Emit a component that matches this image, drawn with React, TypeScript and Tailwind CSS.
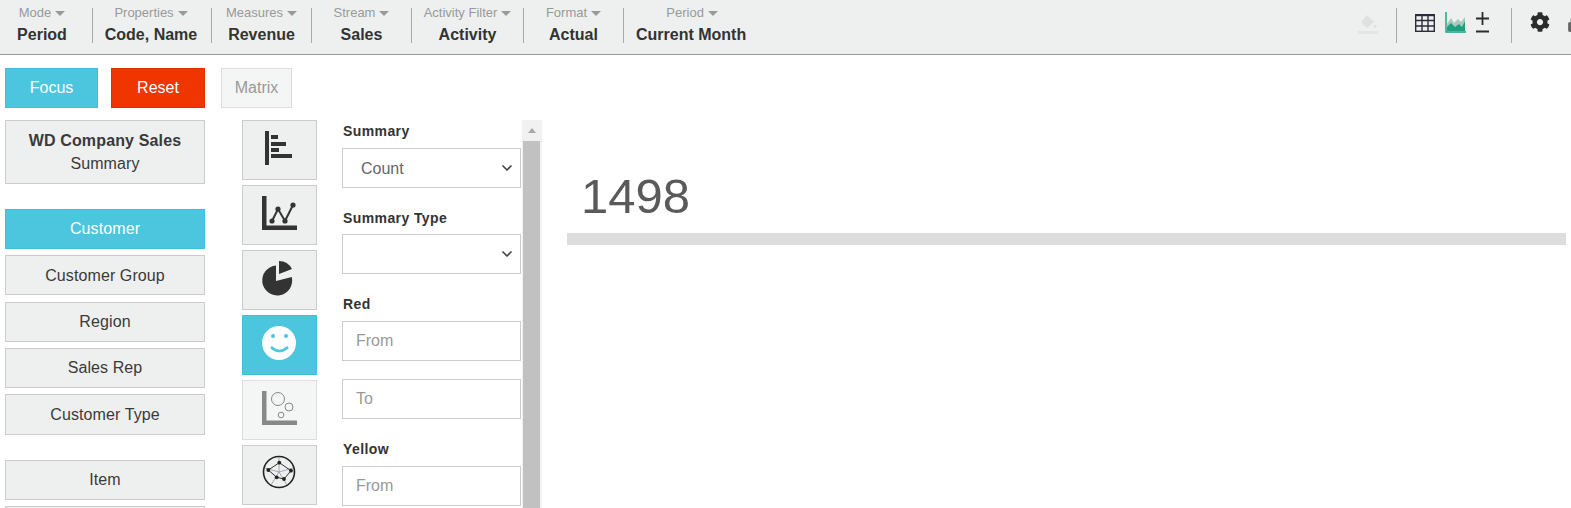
import React from 'react';
import { FaCog, FaLock } from 'react-icons/fa';
import { ChevronDown } from 'lucide-react';

const filters = [
  { label: 'Mode', value: 'Period', cell: 'w-[93px] pr-2' },
  { label: 'Properties', value: 'Code, Name', cell: 'w-[119px] pr-[2px]' },
  { label: 'Measures', value: 'Revenue', cell: 'w-[100px]' },
  { label: 'Stream', value: 'Sales', cell: 'w-[100px]' },
  { label: 'Activity Filter', value: 'Activity', cell: 'w-[112px]' },
  { label: 'Format', value: 'Actual', cell: 'w-[100px]' },
];

const Caret = () => <span className="ml-1 inline-block align-middle w-0 h-0 border-x-[5px] border-x-transparent border-t-[5px] border-t-[#999]" />;

const Divider = () => <div className="w-px h-[35px] bg-[#aaa] shrink-0" />;

const FilterCell: React.FC<{ label: string; value: string; cell: string }> = ({ label, value, cell }) => (
  <div className={`${cell} h-[35px] shrink-0 flex flex-col items-center border-r border-[#aaa]`}>
    <div className="text-[13px] leading-[15px] -mt-[3px] text-[#999] whitespace-nowrap">
      {label}
      <Caret />
    </div>
    <div className="mt-[5px] text-[16px] leading-[20px] font-bold text-[#333] whitespace-nowrap">{value}</div>
  </div>
);

const SideButton: React.FC<{ children?: React.ReactNode; h?: string; active?: boolean; className?: string }> = ({ children, h = 'h-[40px]', active, className = '' }) => (
  <div
    className={`${h} ${className} shrink-0 box-border border flex flex-col items-center justify-center text-[16px] tracking-[0.1px] ${
      active ? 'bg-[#4cc5df] border-[#3fbfdb] text-white' : 'bg-[#eef0ef] border-[#ccc] text-[#3a3a3a]'
    }`}
  >
    {children}
  </div>
);

const IconButton: React.FC<{ children: React.ReactNode; active?: boolean; faded?: boolean }> = ({ children, active, faded }) => (
  <div
    className={`w-[75px] h-[60px] box-border border shrink-0 ${
      active ? 'bg-[#4cc5df] border-[#3fbfdb]' : faded ? 'bg-[#f4f6f5] border-[#ddd]' : 'bg-[#eef0ef] border-[#ccc]'
    }`}
  >
    <svg viewBox="0 0 73 58" className="block w-[73px] h-[58px]">
      {children}
    </svg>
  </div>
);

const FieldLabel: React.FC<{ children: React.ReactNode; className?: string }> = ({ children, className = '' }) => (
  <div className={`pl-[1px] text-[14px] leading-[18px] font-bold text-[#333] tracking-[0.4px] ${className}`}>{children}</div>
);

const SelectBox: React.FC<{ value?: string; className?: string }> = ({ value, className = '' }) => (
  <div className={`h-[40px] box-border border border-[#ccc] flex items-center justify-between pl-[18px] pr-[5px] text-[16px] text-[#666] ${className}`}>
    <span className="pt-[1px]">{value}</span>
    <ChevronDown className="w-[16px] h-[16px] text-[#444]" strokeWidth={2.5} />
  </div>
);

const TextBox: React.FC<{ placeholder: string; className?: string }> = ({ placeholder, className = '' }) => (
  <input
    readOnly
    placeholder={placeholder}
    className={`block w-full h-[40px] box-border border border-[#ccc] px-[13px] text-[16px] outline-none placeholder:text-[#999] ${className}`}
  />
);

export default function App() {
  return (
    <div className="h-[508px] overflow-hidden bg-white font-['Liberation_Sans',Arial,sans-serif]">
      {/* Top filter bar */}
      <div className="h-[55px] box-border bg-[#eef0ef] border-b border-[#999] flex items-start pt-[8px] overflow-hidden">
        {filters.map((f) => (
          <FilterCell key={f.label} {...f} />
        ))}
        <div className="ml-[12px] flex flex-col items-center shrink-0">
          <div className="ml-[2px] text-[13px] leading-[15px] -mt-[3px] text-[#999] whitespace-nowrap">
            Period
            <Caret />
          </div>
          <div className="mt-[5px] text-[16px] leading-[20px] font-bold text-[#333] whitespace-nowrap">Current Month</div>
        </div>

        <div className="ml-auto -mr-[14px] flex items-start shrink-0">
          <svg viewBox="0 0 20 20" className="w-[20px] h-[20px] mt-[6px]">
            <path d="M9 1 L16 8 L9 14 L3 8 Z" fill="#dfe1e0" />
            <circle cx="17" cy="12" r="1.6" fill="#dfe1e0" />
            <rect x="0" y="17" width="20" height="3" fill="#e4e6e5" />
          </svg>
          <div className="ml-[18px]"><Divider /></div>
          <svg viewBox="0 0 20 18" className="ml-[18px] mt-[6px] w-[20px] h-[18px]" fill="none" stroke="#2f2b3d" strokeWidth="1.4">
            <rect x="0.7" y="0.7" width="18.6" height="16.6" />
            <path d="M0.7 1.2 H19.3" strokeWidth="2" />
            <path d="M7 1V17M13 1V17M1 6.5H19M1 12H19" />
          </svg>
          <svg viewBox="0 0 21 21" className="ml-[10px] mt-[4px] w-[21px] h-[21px]">
            <path d="M2 19 V12 L6 6 L9 11 L13 7 L16 10 L20 5 V19 Z" fill="#a9c9bd" />
            <path d="M2 19 V15 L6 11 L10 15 L14 12 L17 15 L20 9 V19 Z" fill="#1f9e80" />
            <path d="M1 0 V20 H21" fill="none" stroke="#1f9e80" strokeWidth="1.4" />
          </svg>
          <svg viewBox="0 0 13 21" className="ml-[10px] mt-[4px] w-[13px] h-[21px]" stroke="#2b2b2b" strokeWidth="1.8">
            <path d="M6.5 0 V13 M0 6.5 H13 M0 19.5 H13" />
          </svg>
          <div className="ml-[22px]"><Divider /></div>
          <FaCog className="ml-[18px] mt-[4px] text-[#2b2b2b]" size={20} />
          <FaLock className="ml-[17px] mt-[6px] text-[#666]" size={18} />
        </div>
      </div>

      {/* Action buttons */}
      <div className="flex items-start pl-[5px] pt-[13px]">
        <div className="w-[93px] h-[40px] box-border border border-[#3fbfdb] bg-[#4cc5df] text-white text-[16px] flex items-center justify-center">Focus</div>
        <div className="ml-[13px] w-[94px] h-[40px] box-border border border-[#e03000] bg-[#f03500] text-white text-[16px] flex items-center justify-center">Reset</div>
        <div className="ml-[16px] w-[71px] h-[40px] box-border border border-[#ddd] bg-[#f4f6f5] text-[#999] text-[16px] flex items-center justify-center">Matrix</div>
      </div>

      <div className="flex items-start pl-[5px] mt-[12px]">
        {/* Dimension list */}
        <div className="w-[200px] shrink-0 flex flex-col">
          <SideButton h="h-[64px]">
            <div className="font-bold leading-[22px] tracking-[0.15px]">WD Company Sales</div>
            <div className="leading-[23px]">Summary</div>
          </SideButton>
          <SideButton active className="mt-[25px]">Customer</SideButton>
          <SideButton className="mt-[6px] pt-[1px]">Customer Group</SideButton>
          <SideButton className="mt-[7px]">Region</SideButton>
          <SideButton className="mt-[6px]">Sales Rep</SideButton>
          <SideButton h="h-[41px]" className="mt-[6px]">Customer Type</SideButton>
          <SideButton className="mt-[25px]">Item</SideButton>
          <SideButton className="mt-[6px]" />
        </div>

        {/* Chart type icons */}
        <div className="ml-[37px] flex flex-col gap-[5px] shrink-0">
          <IconButton>
            <g fill="#333">
              <rect x="22" y="10" width="4" height="34" />
              <rect x="28" y="14" width="7" height="4" />
              <rect x="28" y="21" width="15" height="4" />
              <rect x="28" y="27" width="8" height="4" />
              <rect x="28" y="33" width="21" height="4" />
            </g>
          </IconButton>
          <IconButton>
            <path d="M19 10 H23.5 V39.5 H54 V44 H19 Z" fill="#333" />
            <path d="M29 35 L35 23 L42 35 L50 19" fill="none" stroke="#333" strokeWidth="2" />
            <g fill="#333">
              <circle cx="29" cy="35" r="2.6" />
              <circle cx="35" cy="23" r="2.6" />
              <circle cx="42" cy="35" r="2.6" />
              <circle cx="50" cy="19" r="2.6" />
            </g>
          </IconButton>
          <IconButton>
            <path d="M33 30 L33 14.5 A15 15 0 1 0 48.8 26 Z" fill="#333" />
            <path d="M36 23 L36 10 A15 15 0 0 1 49 18 Z" fill="#333" />
          </IconButton>
          <IconButton active>
            <circle cx="36" cy="27" r="17" fill="#fff" />
            <circle cx="30" cy="20" r="2" fill="#4cc5df" />
            <circle cx="43" cy="20" r="2" fill="#4cc5df" />
            <path d="M28 31 Q36.5 39 45 31" fill="none" stroke="#4cc5df" strokeWidth="2.6" />
          </IconButton>
          <IconButton faded>
            <path d="M19 10 H23.5 V39.5 H54 V44 H19 Z" fill="#888" />
            <g fill="none" stroke="#888" strokeWidth="1">
              <circle cx="35" cy="18" r="6.5" />
              <circle cx="46" cy="26" r="4" />
              <circle cx="38" cy="34" r="2.8" />
            </g>
          </IconButton>
          <IconButton>
            <circle cx="36" cy="26" r="15.5" fill="none" stroke="#222" strokeWidth="1.6" />
            <path d="M36 26 L36 11 M36 26 L22 22 M36 26 L50 22 M36 26 L28 39 M36 26 L44 39" stroke="#8a8a9a" strokeWidth="0.7" />
            <path d="M36.3 16.7 L48 24.7 L41 33 L33.7 31.3 L25.3 24 Z" fill="none" stroke="#333" strokeWidth="1" />
            <g fill="#222">
              <circle cx="36.3" cy="16.7" r="1.9" />
              <circle cx="48" cy="24.7" r="1.9" />
              <circle cx="41" cy="33" r="1.9" />
              <circle cx="33.7" cy="31.3" r="1.9" />
              <circle cx="25.3" cy="24" r="1.9" />
            </g>
          </IconButton>
        </div>

        {/* Options form */}
        <div className="ml-[25px] w-[179px] shrink-0 flex flex-col">
          <FieldLabel className="mt-[2px]">Summary</FieldLabel>
          <SelectBox value="Count" className="mt-2" />
          <FieldLabel className="mt-[21px]">Summary Type</FieldLabel>
          <SelectBox className="mt-[7px]" />
          <FieldLabel className="mt-[21px]">Red</FieldLabel>
          <TextBox placeholder="From" className="mt-2" />
          <TextBox placeholder="To" className="mt-[18px]" />
          <FieldLabel className="mt-[21px]">Yellow</FieldLabel>
          <TextBox placeholder="From" className="mt-2" />
        </div>

        {/* Scrollbar */}
        <div className="ml-[1px] w-[20px] h-[388px] shrink-0 bg-[#f1f1f1] flex flex-col pl-[1px] pr-[2px]">
          <div className="h-[21px] flex items-center justify-center">
            <div className="w-0 h-0 border-x-[4px] border-x-transparent border-b-[5px] border-b-[#a8a8a8]" />
          </div>
          <div className="flex-1 bg-[#c1c1c1]" />
        </div>

        {/* Result panel */}
        <div className="ml-[25px] w-[999px] shrink-0">
          <div className="pl-[14px] pt-[46px] text-[49px] leading-[60px] text-[#5a5a5a]">1498</div>
          <div className="mt-[7px] h-[12px] bg-[#ddd]" />
        </div>
      </div>
    </div>
  );
}
